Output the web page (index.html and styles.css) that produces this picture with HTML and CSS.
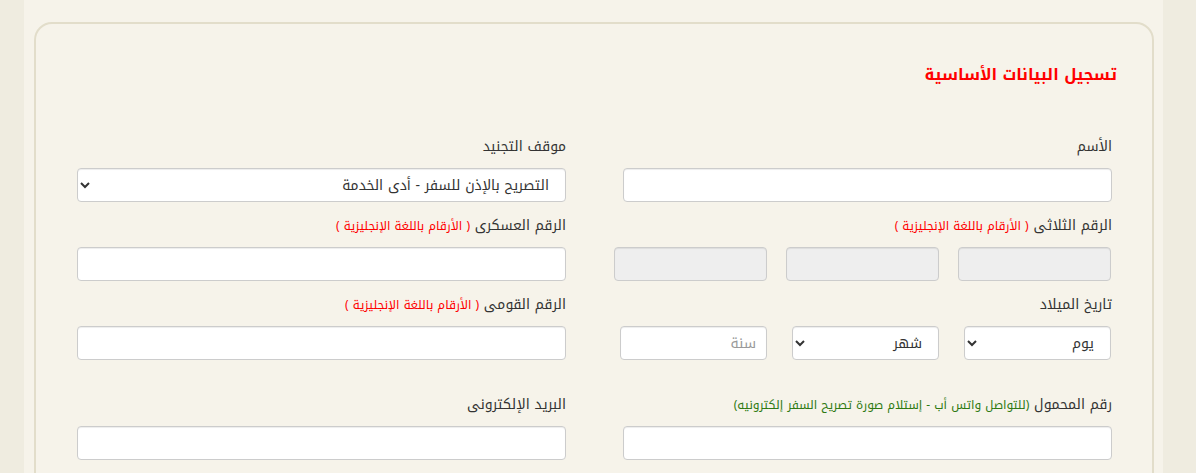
FILE: index.html
```html
<!DOCTYPE html>
<html lang="ar" dir="rtl">
<head>
<meta charset="utf-8">
<title>تسجيل البيانات الأساسية</title>
<link rel="stylesheet" href="styles.css">
</head>
<body>
<div class="page">
  <div class="card">
    <h2 class="title">تسجيل البيانات الأساسية</h2>
    <div class="grid">
      <div class="field">
        <label class="lbl">الأسم</label>
        <input class="ctl" type="text">
      </div>
      <div class="field">
        <label class="lbl">موقف التجنيد</label>
        <select class="ctl sel">
          <option>التصريح بالإذن للسفر - أدى الخدمة</option>
        </select>
      </div>

      <div class="field">
        <label class="lbl">الرقم الثلاثى <span class="hint-red">( الأرقام باللغة الإنجليزية )</span></label>
        <div class="triple">
          <input class="ctl ro" type="text" readonly>
          <input class="ctl ro" type="text" readonly>
          <input class="ctl ro" type="text" readonly>
        </div>
      </div>
      <div class="field">
        <label class="lbl">الرقم العسكرى <span class="hint-red">( الأرقام باللغة الإنجليزية )</span></label>
        <input class="ctl" type="text">
      </div>

      <div class="field tall">
        <label class="lbl">تاريخ الميلاد</label>
        <div class="dates">
          <select class="ctl sel"><option>يوم</option></select>
          <select class="ctl sel"><option>شهر</option></select>
          <input class="ctl" type="text" placeholder="سنة">
        </div>
      </div>
      <div class="field">
        <label class="lbl">الرقم القومى <span class="hint-red">( الأرقام باللغة الإنجليزية )</span></label>
        <input class="ctl" type="text">
      </div>

      <div class="field">
        <label class="lbl">رقم المحمول <span class="hint-green">(للتواصل واتس أب - إستلام صورة تصريح السفر إلكترونيه)</span></label>
        <input class="ctl" type="text">
      </div>
      <div class="field">
        <label class="lbl">البريد الإلكترونى</label>
        <input class="ctl" type="email">
      </div>
    </div>
  </div>
</div>
</body>
</html>
```

FILE: styles.css
```css
html, body {
  margin: 0;
  padding: 0;
}
body {
  background: #efece0;
  font-family: "Noto Kufi Arabic", "DejaVu Sans", sans-serif;
  color: #333;
}
.page {
  margin: 0 33px 0 24px;
  background: #f6f3ea;
  padding: 22px 9px 40px 10px;
  min-height: 473px;
  box-sizing: border-box;
}
.card {
  border: 2px solid #e2ddca;
  border-radius: 18px 18px 0 0;
  padding: 38px 40px 30px 41px;
}
.title {
  height: 26px;
  margin: 0 -5px 48px 0;
  font-size: 16px;
  line-height: 26px;
  font-weight: bold;
  color: #ff0000;
}
.grid {
  display: grid;
  grid-template-columns: 489px 489px;
  column-gap: 57px;
  row-gap: 13px;
}
.field {
  display: flex;
  flex-direction: column;
}
.field.tall {
  padding-bottom: 21px;
}
.lbl {
  display: block;
  height: 22px;
  font-size: 14px;
  line-height: 22px;
  margin-bottom: 10px;
  color: #333;
  white-space: nowrap;
}
.hint-red {
  font-size: 12px;
  color: #ff0000;
}
.hint-green {
  font-size: 12px;
  color: #2f7a12;
}
.ctl {
  display: block;
  box-sizing: border-box;
  width: 100%;
  height: 34px;
  border: 1px solid #ccc;
  border-radius: 4px;
  background: #fff;
  font-family: "Noto Kufi Arabic", "DejaVu Sans", sans-serif;
  font-size: 14px;
  color: #555;
  padding: 0 10px;
  margin: 0;
  box-shadow: inset 0 1px 1px rgba(0,0,0,0.075);
}
.ctl::placeholder {
  color: #999;
}
.sel {
  padding: 0 12px 0 8px;
  color: #333;
}
.ctl.ro {
  background: #eee;
}
.triple {
  display: grid;
  grid-template-columns: repeat(3, 153px);
  column-gap: 19px;
  margin-right: 1px;
  margin-left: -9px;
}
.dates {
  display: grid;
  grid-template-columns: repeat(3, 147px);
  column-gap: 25px;
  margin-right: 1px;
  margin-left: -3px;
}
```
